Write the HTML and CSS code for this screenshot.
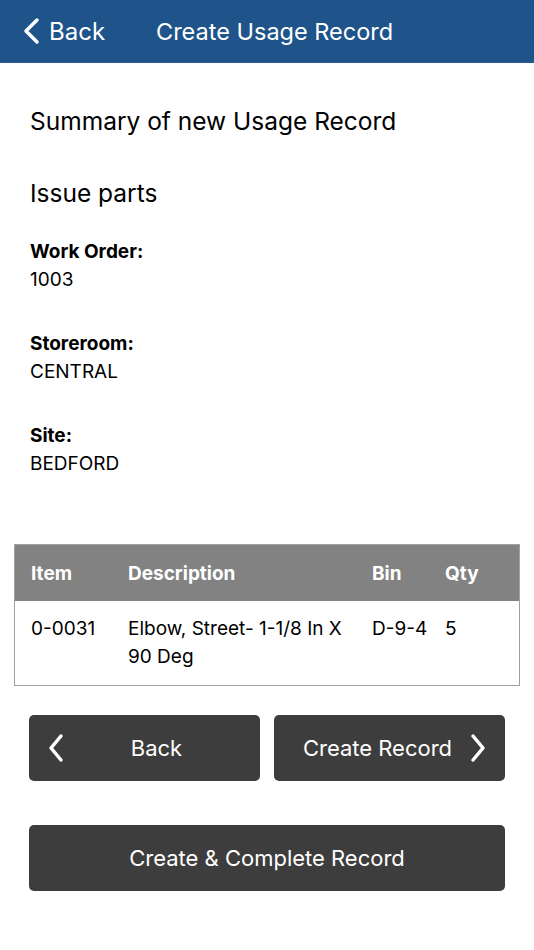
FILE: index.html
```html
<!DOCTYPE html>
<html lang="en">
<head>
    <meta charset="UTF-8">
    <meta name="viewport" content="width=device-width, initial-scale=1.0">
    <title>Create Usage Record</title>
    <link rel="stylesheet" href="styles.css">
</head>
<body>
    <header class="navbar">
        <a class="nav-back" href="#">
            <svg class="chev" width="18" height="28" viewBox="0 0 18 28"><path d="M15 3 L4 14 L15 25" fill="none" stroke="#fff" stroke-width="3.5" stroke-linecap="round" stroke-linejoin="round"/></svg>
            <span>Back</span>
        </a>
        <h1 class="nav-title">Create Usage Record</h1>
    </header>

    <main class="content">
        <h2 class="heading">Summary of new Usage Record</h2>
        <h2 class="heading sub">Issue parts</h2>

        <div class="field">
            <div class="label">Work Order:</div>
            <div class="value">1003</div>
        </div>
        <div class="field">
            <div class="label">Storeroom:</div>
            <div class="value">CENTRAL</div>
        </div>
        <div class="field">
            <div class="label">Site:</div>
            <div class="value">BEDFORD</div>
        </div>
    </main>

    <table class="parts">
        <thead>
            <tr>
                <th class="c-item">Item</th>
                <th class="c-desc">Description</th>
                <th class="c-bin">Bin</th>
                <th class="c-qty">Qty</th>
            </tr>
        </thead>
        <tbody>
            <tr>
                <td>0-0031</td>
                <td>Elbow, Street- 1-1/8 In X 90 Deg</td>
                <td>D-9-4</td>
                <td>5</td>
            </tr>
        </tbody>
    </table>

    <div class="actions">
        <div class="row">
            <button class="btn">
                <svg class="btn-chev left" width="18" height="30" viewBox="0 0 18 30"><path d="M14 3 L4 15 L14 27" fill="none" stroke="#fff" stroke-width="3.5" stroke-linecap="round" stroke-linejoin="round"/></svg>
                <span class="btn-back">Back</span>
            </button>
            <button class="btn">
                <span class="btn-next">Create Record</span>
                <svg class="btn-chev right" width="18" height="30" viewBox="0 0 18 30"><path d="M4 3 L14 15 L4 27" fill="none" stroke="#fff" stroke-width="3.5" stroke-linecap="round" stroke-linejoin="round"/></svg>
            </button>
        </div>
        <button class="btn wide">Create &amp; Complete Record</button>
    </div>
</body>
</html>
```

FILE: styles.css
```css
body {
    font-family: Inter, "Noto Sans", sans-serif;
    margin: 0;
    padding: 0;
    background-color: #fff;
    color: #000;
}

.navbar {
    background-color: #1f548a;
    height: 62px;
    border-bottom: 1px solid #2a5d93;
    display: flex;
    align-items: center;
    color: #fff;
}

.nav-back {
    display: flex;
    align-items: center;
    color: #fff;
    text-decoration: none;
    font-size: 24px;
    margin-left: 22px;
    width: 134px;
}

.nav-back span {
    margin-left: 9px;
}

.nav-title {
    margin: 0;
    font-size: 23.5px;
    font-weight: 400;
}

.content {
    padding: 0 30px;
}

.heading {
    font-size: 24.5px;
    font-weight: 400;
    margin: 42px 0 0;
    line-height: 32px;
}

.heading.sub {
    margin-top: 40px;
}

.field {
    font-size: 19px;
    line-height: 28px;
    margin-top: 29px;
    margin-bottom: 36px;
}

.field + .field {
    margin-top: 0;
}

.label {
    font-weight: 700;
}

.parts {
    width: 506px;
    margin: 66px 0 0 14px;
    border-collapse: collapse;
    border: 1px solid #a0a0a0;
    font-size: 19px;
    table-layout: fixed;
}

.parts th {
    background-color: #828282;
    color: #fff;
    text-align: left;
    font-weight: 700;
    height: 56px;
    padding: 0;
}

.parts td {
    vertical-align: top;
    padding: 14px 0 14px;
    line-height: 28px;
}

.parts th:first-child, .parts td:first-child {
    padding-left: 16px;
}

.c-item { width: 97px; }
.c-desc { width: 244px; }
.c-bin { width: 73px; }

.parts td:nth-child(2) {
    padding-right: 12px;
}

.actions {
    padding: 29px 29px 0;
}

.row {
    display: flex;
    gap: 14px;
}

.btn {
    flex: 1;
    height: 66px;
    background-color: #3d3d3d;
    color: #fff;
    border: none;
    border-radius: 5px;
    font-family: inherit;
    font-size: 22px;
    display: flex;
    align-items: center;
    justify-content: center;
    position: relative;
    cursor: pointer;
}

.btn-chev {
    position: absolute;
    top: 18px;
}

.btn-chev.left { left: 18px; }
.btn-chev.right { right: 18px; }

.btn-back {
    margin-left: 24px;
}

.btn-next {
    margin-left: -24px;
}

.btn.wide {
    width: 100%;
    margin-top: 44px;
}
```
